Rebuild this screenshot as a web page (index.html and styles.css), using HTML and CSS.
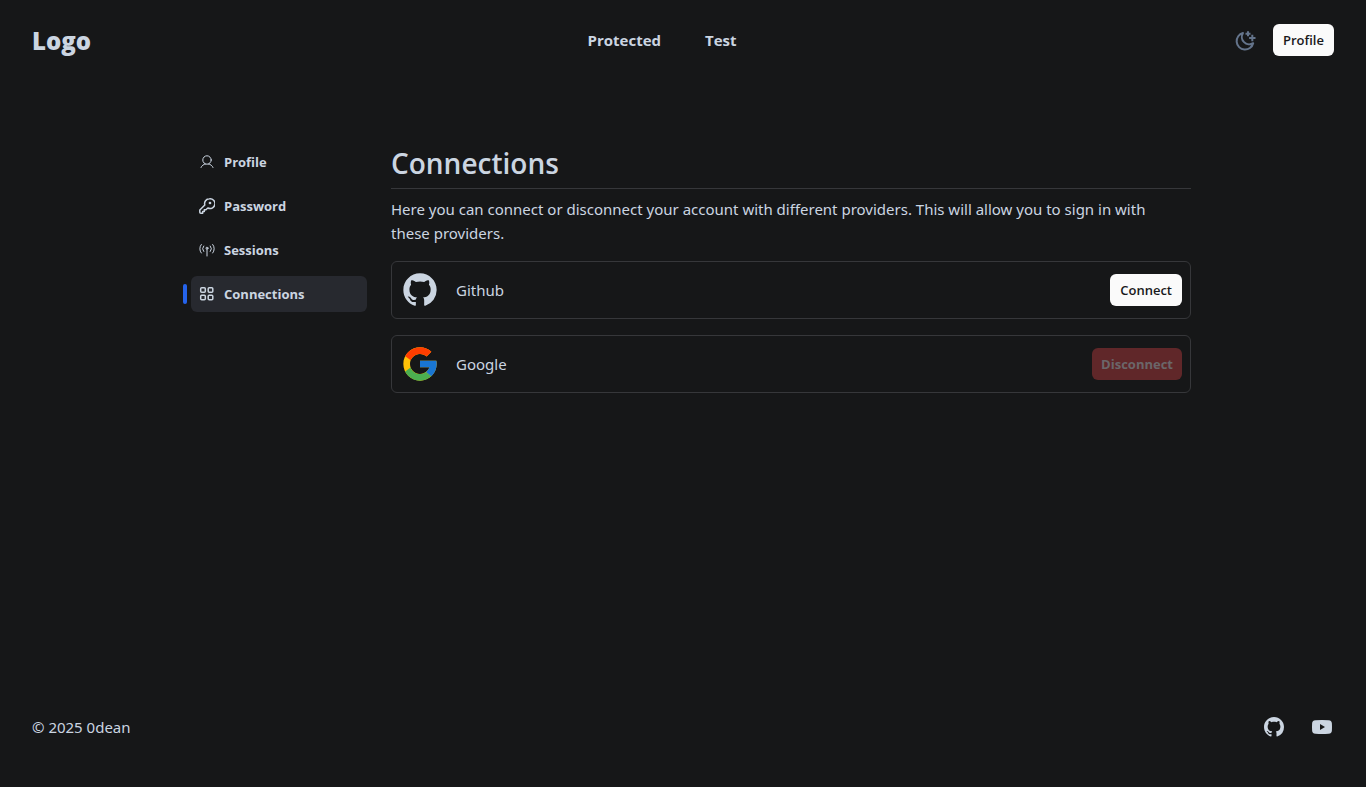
FILE: index.html
```html
<!DOCTYPE html>
<html lang="en">
<head>
  <meta charset="utf-8">
  <meta name="viewport" content="width=device-width, initial-scale=1">
  <title>Connections</title>
  <link rel="stylesheet" href="styles.css">
</head>
<body>
  <svg class="sprite" aria-hidden="true">
    <symbol id="github" viewBox="0 0 24 24">
      <path transform="translate(2 2) scale(1.25)" d="M8 0C3.58 0 0 3.58 0 8c0 3.54 2.29 6.53 5.47 7.59.4.07.55-.17.55-.38 0-.19-.01-.82-.01-1.49-2.01.37-2.53-.49-2.69-.94-.09-.23-.48-.94-.82-1.13-.28-.15-.68-.52-.01-.53.63-.01 1.08.58 1.23.82.72 1.21 1.87.87 2.33.66.07-.52.28-.87.51-1.07-1.78-.2-3.64-.89-3.64-3.95 0-.87.31-1.59.82-2.15-.08-.2-.36-1.02.08-2.12 0 0 .67-.21 2.2.82.64-.18 1.32-.27 2-.27.68 0 1.36.09 2 .27 1.53-1.04 2.2-.82 2.2-.82.44 1.1.16 1.92.08 2.12.51.56.82 1.27.82 2.15 0 3.07-1.87 3.75-3.65 3.95.29.25.54.73.54 1.48 0 1.07-.01 1.93-.01 2.2 0 .21.15.46.55.38A8.012 8.012 0 0016 8c0-4.42-3.58-8-8-8z"/>
    </symbol>
  </svg>

  <header class="header">
    <a class="logo" href="#">Logo</a>
    <nav class="nav" aria-label="Main">
      <a href="#">Protected</a>
      <a href="#">Test</a>
    </nav>
    <div class="actions">
      <button class="theme" type="button" aria-label="Toggle theme">
        <svg class="icon" viewBox="0 0 24 24" fill="none" stroke="currentColor" stroke-width="2" stroke-linejoin="round">
          <path d="M10 5A8.400 8.400 0 1 0 20.200 15.200 7.400 7.400 0 0 1 10 5Z"/>
          <path d="M15 3.200v5M12.500 5.700h5M19.300 6.800v6.400M16.100 10h6.400"/>
        </svg>
      </button>
      <button class="btn" type="button">Profile</button>
    </div>
  </header>

  <main class="main">
    <nav class="side" aria-label="Settings">
      <a class="side-link" href="#">
        <svg class="icon-sm" viewBox="0 0 16 16" fill="none" stroke="currentColor" stroke-linecap="round"><circle cx="8" cy="6" r="4.200"/><path d="M2 13.500c.8-2 2.600-3.200 4.500-3.500M14 13.500c-.8-2-2.600-3.200-4.500-3.500"/></svg>
        Profile
      </a>
      <a class="side-link" href="#">
        <svg class="icon-sm" viewBox="0 0 16 16" fill="none" stroke="currentColor" stroke-width="1.500" stroke-linejoin="round"><path d="M10.400.8a4.800 4.800 0 0 0-4.600 6.200L.8 12v2.200q0 1 1 1h1.900v-1.700h1.600v-1.800h1.600l1.900-1.700a4.900 4.900 0 1 0 1.600-9.200Z"/><circle cx="11" cy="5" r=".6" fill="currentColor"/></svg>
        Password
      </a>
      <a class="side-link" href="#">
        <svg class="icon-sm" viewBox="0 0 16 16" fill="none" stroke="currentColor" stroke-linecap="round"><path d="M2.300 2.500a6.500 6.500 0 0 0 0 8.500M4.700 4a4.200 4.200 0 0 0 0 5.500M13.700 2.500a6.500 6.500 0 0 1 0 8.500M11.300 4a4.200 4.200 0 0 1 0 5.500M8 7v7"/><circle cx="8" cy="6.200" r="1"/></svg>
        Sessions
      </a>
      <a class="side-link side-link-active" href="#" aria-current="page">
        <svg class="icon-sm" viewBox="0 0 16 16" fill="none" stroke="currentColor" stroke-width="1.500"><rect x="1.700" y="1.700" width="4.600" height="4.600" rx="1"/><rect x="9.200" y="1.700" width="4.600" height="4.600" rx="1"/><rect x="1.700" y="9.200" width="4.600" height="4.600" rx="1"/><rect x="9.200" y="9.200" width="4.600" height="4.600" rx="1"/></svg>
        Connections
      </a>
    </nav>

    <section class="content">
      <h1 class="title">Connections</h1>
      <p class="intro">Here you can connect or disconnect your account with different providers. This will allow you to sign in with these providers.</p>
      <ul class="providers">
        <li class="provider">
          <svg class="icon-lg" aria-hidden="true"><use href="#github"/></svg>
          <span class="provider-name">Github</span>
          <button class="btn" type="button">Connect</button>
        </li>
        <li class="provider">
          <svg class="icon-lg" viewBox="0 0 48 48" aria-hidden="true">
            <path fill="#ffc107" d="M43.611 20.083H42V20H24v8h11.303c-1.649 4.657-6.080 8-11.303 8-6.627 0-12-5.373-12-12s5.373-12 12-12c3.059 0 5.842 1.154 7.961 3.039l5.657-5.657C34.046 6.053 29.268 4 24 4 12.955 4 4 12.955 4 24s8.955 20 20 20 20-8.955 20-20c0-1.341-.138-2.650-.389-3.917z"/>
            <path fill="#ff3d00" d="M6.306 14.691l6.571 4.819C14.655 15.108 18.961 12 24 12c3.059 0 5.842 1.154 7.961 3.039l5.657-5.657C34.046 6.053 29.268 4 24 4 16.318 4 9.656 8.337 6.306 14.691z"/>
            <path fill="#4caf50" d="M24 44c5.166 0 9.860-1.977 13.409-5.192l-6.190-5.238C29.211 35.091 26.715 36 24 36c-5.202 0-9.619-3.317-11.283-7.946l-6.522 5.025C9.505 39.556 16.227 44 24 44z"/>
            <path fill="#1976d2" d="M43.611 20.083H42V20H24v8h11.303c-.792 2.237-2.231 4.166-4.087 5.571l6.193 5.237C36.971 39.205 44 34 44 24c0-1.341-.138-2.650-.389-3.917z"/>
          </svg>
          <span class="provider-name">Google</span>
          <button class="btn btn-danger" type="button" disabled>Disconnect</button>
        </li>
      </ul>
    </section>
  </main>

  <footer class="footer">
    <span>© 2025 0dean</span>
    <div class="social">
      <a href="#" aria-label="GitHub"><svg class="icon"><use href="#github"/></svg></a>
      <a href="#" aria-label="YouTube"><svg class="icon" viewBox="0 0 24 24"><path fill-rule="evenodd" d="M5.500 5.200Q12 4.800 18.500 5.200C21 5.400 21.800 6.400 21.900 8.500q.2 3.500 0 7c-.1 2.100-.9 3.100-3.400 3.300q-6.500.4-13 0C3 18.600 2.200 17.600 2.100 15.500q-.2-3.500 0-7C2.200 6.400 3 5.400 5.500 5.200ZM10 9v6l5-3Z"/></svg></a>
    </div>
  </footer>
</body>
</html>
```
FILE: styles.css
```css
* {
  box-sizing: border-box;
}

body {
  display: flex;
  flex-direction: column;
  min-height: 100vh;
  margin: 0;
  background: #161718;
  color: #cbd5e1;
  font: 15px/24px "Noto Sans", "Open Sans", sans-serif;
}

a {
  color: inherit;
  text-decoration: none;
}

svg {
  display: block;
  flex: none;
}

.sprite {
  position: absolute;
  width: 0;
  height: 0;
}

.icon {
  width: 24px;
  height: 24px;
  fill: currentColor;
}

.theme .icon {
  fill: none;
}

.icon-sm {
  width: 16px;
  height: 16px;
}

.icon-lg {
  width: 40px;
  height: 40px;
  fill: currentColor;
}

.header {
  display: flex;
  align-items: center;
  justify-content: space-between;
  padding: 24px 32px;
  font-family: "Open Sans", "Noto Sans", sans-serif;
}

.logo {
  padding-top: 2px;
  font-size: 24px;
  font-weight: 800;
  line-height: 30px;
}

.nav {
  display: flex;
  gap: 44px;
  font-weight: 700;
}

.actions {
  display: flex;
  align-items: center;
  gap: 16px;
}

.theme {
  padding: 0;
  border: 0;
  background: none;
  color: #64748b;
}

.btn {
  height: 32px;
  padding: 0 10px;
  border: 0;
  border-radius: 6px;
  background: #fafafa;
  color: #18181b;
  font: 600 13px/20px "Open Sans", "Noto Sans", sans-serif;
}

.btn-danger {
  padding: 0 9px;
  background: #602729;
  color: #6b6669;
  font-weight: 700;
}

.main {
  display: grid;
  grid-template-columns: 192px minmax(0, 1fr);
  gap: 24px;
  flex: 1;
  align-items: start;
  width: 100%;
  max-width: 1016px;
  margin: 0 auto;
  padding-top: 64px;
}

.side {
  display: flex;
  flex-direction: column;
  gap: 8px;
  padding-left: 16px;
  font-family: "Open Sans", "Noto Sans", sans-serif;
}

.side-link {
  position: relative;
  display: flex;
  align-items: center;
  gap: 9px;
  height: 36px;
  padding: 0 8px;
  border-radius: 6px;
  font-size: 13px;
  font-weight: 700;
}

.side-link-active {
  background: #27292f;
}

.side-link-active::before {
  content: "";
  position: absolute;
  top: 8px;
  left: -8px;
  width: 4px;
  height: 20px;
  border-radius: 2px;
  background: #2563eb;
}

.title {
  margin: 0 0 8px;
  padding-bottom: 6px;
  border-bottom: 1px solid #36373a;
  font: 600 28px/38px "Open Sans", "Noto Sans", sans-serif;
}

.intro {
  margin: 0 0 16px;
  padding-right: 16px;
}

.providers {
  display: flex;
  flex-direction: column;
  gap: 16px;
  margin: 0;
  padding: 0;
  list-style: none;
}

.provider {
  display: flex;
  align-items: center;
  gap: 16px;
  padding: 8px;
  border: 1px solid #36373a;
  border-radius: 6px;
}

.provider-name {
  flex: 1;
}

.footer {
  display: flex;
  align-items: center;
  justify-content: space-between;
  padding: 48px 32px;
}

.social {
  display: flex;
  gap: 24px;
}
```
